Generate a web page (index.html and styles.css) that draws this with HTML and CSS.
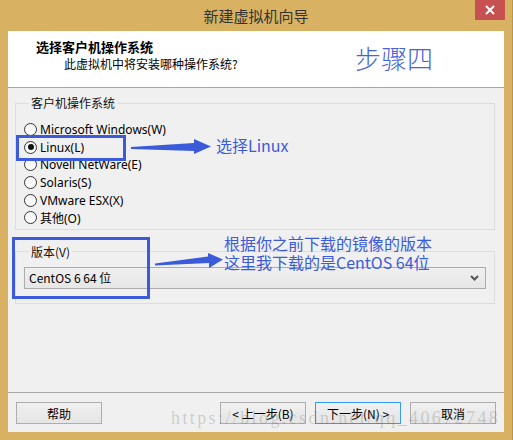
FILE: index.html
```html
<!DOCTYPE html>
<html lang="zh-CN">
<head>
  <meta charset="UTF-8">
  <meta name="viewport" content="width=device-width, initial-scale=1.0">
  <title>新建虚拟机向导</title>
  <link rel="stylesheet" href="styles.css">
</head>
<body>
  <div class="window">
    <div class="titlebar">
      <span></span>
      <span class="title">新建虚拟机向导</span>
      <button class="close">
        <svg width="10" height="10" viewBox="0 0 10 10"><path d="M1 1 L9 9 M9 1 L1 9" stroke="#fff" stroke-width="2"/></svg>
      </button>
    </div>

    <div class="dialog">
      <div class="header">
        <div class="heading">选择客户机操作系统</div>
        <div class="subheading">此虚拟机中将安装哪种操作系统?</div>
      </div>

      <div class="content">
        <fieldset class="group os-group">
          <legend>客户机操作系统</legend>
          <label class="option"><span class="radio"></span>Microsoft Windows(W)</label>
          <label class="option"><span class="radio checked"></span>Linux(L)</label>
          <label class="option"><span class="radio"></span>Novell NetWare(E)</label>
          <label class="option"><span class="radio"></span>Solaris(S)</label>
          <label class="option"><span class="radio"></span>VMware ESX(X)</label>
          <label class="option"><span class="radio"></span>其他(O)</label>
        </fieldset>

        <fieldset class="group version-group">
          <legend>版本(V)</legend>
          <div class="select">
            <span>CentOS 6 64 位</span>
            <svg width="9" height="6" viewBox="0 0 9 6"><path d="M1 1 L4.5 4.5 L8 1" fill="none" stroke="#555" stroke-width="2"/></svg>
          </div>
        </fieldset>
      </div>

      <div class="buttons">
        <button class="btn">帮助</button>
        <span class="spacer"></span>
        <button class="btn">&lt; 上一步(B)</button>
        <button class="btn default">下一步(N) &gt;</button>
        <button class="btn">取消</button>
      </div>
    </div>
  </div>

  <!-- annotations drawn over the screenshot -->
  <div class="note step">步骤四</div>
  <div class="mark mark-linux"></div>
  <div class="mark mark-version"></div>
  <div class="note note-linux">选择Linux</div>
  <div class="note note-version">根据你之前下载的镜像的版本<br>这里我下载的是CentOS 64位</div>
  <svg class="arrows" width="513" height="440" viewBox="0 0 513 440">
    <polygon points="131,147 131,149 194,151 194,154 211,146.5 194,139 194,143" fill="#3b5bdb"/>
    <polygon points="155,263.5 155,265.5 209,263 209,268 223,259.5 208,253 208,256.5" fill="#3b5bdb"/>
  </svg>
  <div class="watermark">https://blog.csdn.net/qq_40672748</div>
</body>
</html>
```

FILE: styles.css
```css
* {
  box-sizing: border-box;
}
body {
  margin: 0;
  width: 513px;
  height: 440px;
  position: relative;
  overflow: hidden;
  background: #d8b262;
  font-family: "Noto Sans", "Noto Sans CJK SC", sans-serif;
  font-size: 12px;
  color: #000;
}
.window {
  height: 440px;
  padding: 0 8px 8px;
  border-right: 1px solid #b8954e;
  display: flex;
  flex-direction: column;
}
.titlebar {
  height: 31px;
  display: grid;
  grid-template-columns: 1fr auto 1fr;
  align-items: center;
}
.title {
  font-family: "Noto Sans CJK SC", sans-serif;
  font-size: 15px;
  color: #333;
}
.close {
  justify-self: end;
  align-self: start;
  width: 30px;
  height: 20px;
  margin-right: -1px;
  border: none;
  padding: 0;
  background: #c75050;
  display: flex;
  align-items: center;
  justify-content: center;
}
.dialog {
  flex: 1;
  background: #f0f0f0;
  display: flex;
  flex-direction: column;
}
.header {
  height: 57px;
  background: #fff;
  border-bottom: 1px solid #a8a8a8;
  padding: 8px 0 0 28px;
}
.heading {
  font-family: "Noto Sans CJK SC", sans-serif;
  font-size: 13px;
  font-weight: bold;
  line-height: 16px;
}
.subheading {
  font-family: "Noto Sans CJK SC", sans-serif;
  line-height: 16px;
  margin: 1px 0 0 28px;
}
.content {
  height: 305px;
  border-bottom: 1px solid #a8a8a8;
  padding: 8px 9px 0 7px;
}
.group {
  margin: 0;
  border: 1px solid #dcdcdc;
  padding: 0 8px;
}
.group legend {
  padding: 0 2px;
  margin-left: 5px;
  line-height: 14px;
  font-family: "Noto Sans CJK SC", sans-serif;
  color: #111;
}
.os-group {
  padding-top: 11px;
  padding-bottom: 2px;
}
.option {
  height: 17.6px;
  display: flex;
  align-items: center;
  gap: 3px;
}
.radio {
  width: 13px;
  height: 13px;
  border-radius: 50%;
  border: 1px solid #333;
  background: linear-gradient(#f4f4f4, #fff);
  display: flex;
  align-items: center;
  justify-content: center;
}
.radio.checked::after {
  content: "";
  width: 6px;
  height: 6px;
  border-radius: 50%;
  background: #111;
}
.version-group {
  margin-top: 15px;
  padding-top: 8px;
  padding-bottom: 14px;
}
.select {
  height: 22px;
  border: 1px solid #acacac;
  background: linear-gradient(#f0f0f0, #e6e6e6);
  display: flex;
  align-items: center;
  justify-content: space-between;
  padding: 0 6px 0 4px;
  font-family: "Noto Sans CJK SC", sans-serif;
}
.buttons {
  height: 39px;
  padding: 9px 8px 0;
  display: flex;
  align-items: flex-start;
  gap: 9px;
}
.spacer {
  flex: 1;
}
.btn {
  width: 86px;
  height: 22px;
  border: 1px solid #adadad;
  background: linear-gradient(#f0f0f0, #e5e5e5);
  font-family: "Noto Sans CJK SC", sans-serif;
  font-size: 12px;
  color: #000;
  padding: 0;
}
.btn.default {
  border-color: #3399ff;
}
.note {
  position: absolute;
  color: #3b5bdb;
  font-family: "Noto Sans CJK SC", sans-serif;
}
.step {
  left: 355px;
  top: 42px;
  font-size: 26px;
  line-height: 32px;
  font-weight: 300;
  color: #4763dc;
}
.note-linux {
  left: 216px;
  top: 136px;
  font-size: 16px;
  line-height: 19px;
}
.note-version {
  left: 224px;
  top: 234px;
  font-size: 16px;
  line-height: 19px;
}
.mark {
  position: absolute;
  border: 3px solid #3b5bdb;
}
.mark-linux {
  left: 16px;
  top: 135px;
  width: 110px;
  height: 26px;
}
.mark-version {
  left: 12px;
  top: 237px;
  width: 138px;
  height: 62px;
}
.arrows {
  position: absolute;
  left: 0;
  top: 0;
  pointer-events: none;
}
.watermark {
  position: absolute;
  left: 171px;
  top: 408px;
  font-family: "Liberation Serif", serif;
  font-size: 18px;
  line-height: 20px;
  letter-spacing: 2.4px;
  color: rgba(110, 110, 110, 0.28);
  white-space: nowrap;
}
```
